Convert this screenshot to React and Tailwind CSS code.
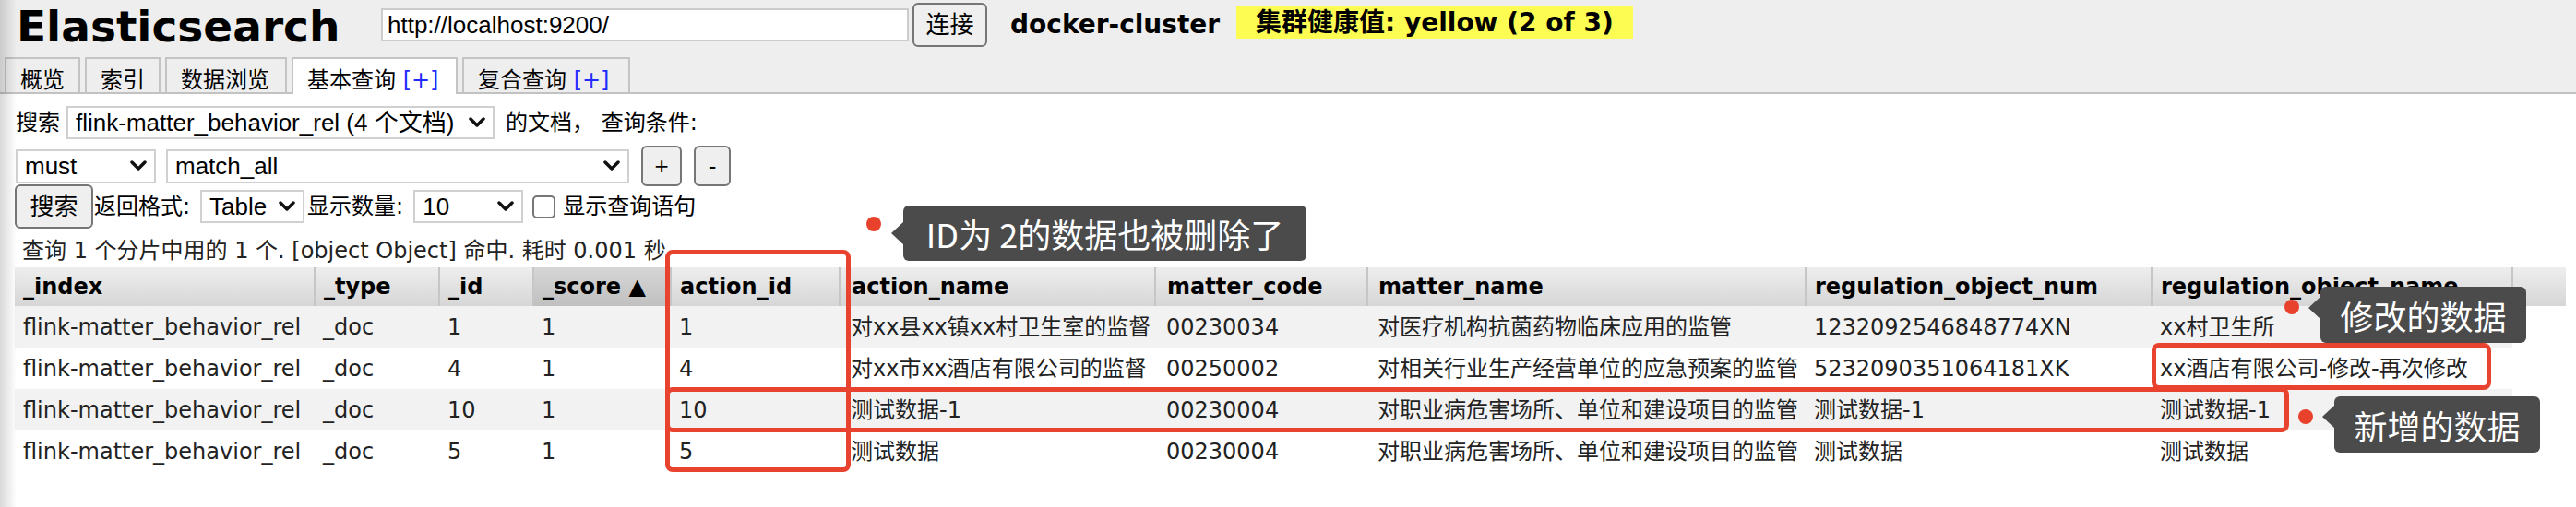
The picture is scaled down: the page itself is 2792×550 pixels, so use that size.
import React from "react";

const CTRL = "font-['Liberation_Sans','Noto_Sans_CJK_SC',sans-serif]";

const columns = [
  { name: "_index", w: "w-[325px]" },
  { name: "_type", w: "w-[135px]" },
  { name: "_id", w: "w-[102px]" },
  { name: "_score ▲", w: "w-[149px]", sorted: true },
  { name: "action_id", w: "w-[183px]" },
  { name: "action_name", w: "w-[342px]", pad: "pl-[12px]" },
  { name: "matter_code", w: "w-[230px]", pad: "pl-[12px]" },
  { name: "matter_name", w: "w-[475px]", pad: "pl-[11px]" },
  { name: "regulation_object_num", w: "w-[375px]" },
  { name: "regulation_object_name", w: "w-[391px]" },
];

const rows = [
  ["flink-matter_behavior_rel", "_doc", "1", "1", "1", "对xx县xx镇xx村卫生室的监督", "00230034", "对医疗机构抗菌药物临床应用的监管", "1232092546848774XN", "xx村卫生所"],
  ["flink-matter_behavior_rel", "_doc", "4", "1", "4", "对xx市xx酒店有限公司的监督", "00250002", "对相关行业生产经营单位的应急预案的监管", "5232090351064181XK", "xx酒店有限公司-修改-再次修改"],
  ["flink-matter_behavior_rel", "_doc", "10", "1", "10", "测试数据-1", "00230004", "对职业病危害场所、单位和建设项目的监管", "测试数据-1", "测试数据-1"],
  ["flink-matter_behavior_rel", "_doc", "5", "1", "5", "测试数据", "00230004", "对职业病危害场所、单位和建设项目的监管", "测试数据", "测试数据"],
];

function Chevron() {
  return (
    <svg width="18" height="12" viewBox="0 0 18 12" className="shrink-0">
      <polyline points="2,2 9,9 16,2" fill="none" stroke="#111" strokeWidth="3.5" strokeLinecap="round" strokeLinejoin="round" />
    </svg>
  );
}

function Select({ value, className }) {
  return (
    <div className={`flex items-center justify-between border-2 border-[#d0d0d0] bg-white pl-[8px] pr-[8px] text-[26px] text-black ${CTRL} ${className}`}>
      <span className="whitespace-nowrap">{value}</span>
      <Chevron />
    </div>
  );
}

function Tab({ label, plus, active, w }) {
  return (
    <div
      className={`border-2 border-b-0 border-[#c4c4c4] pl-[15px] pt-[8px] text-[24px] leading-[30px] whitespace-nowrap ${w} ${
        active ? "relative z-10 h-[40px] -mb-[2px] bg-white" : "h-[38px] bg-[#eeeeee]"
      }`}
    >
      {label}
      {plus && <span className="text-[#1f2bff]"> [+]</span>}
    </div>
  );
}

export default function App() {
  return (
    <div className="relative h-[550px] w-[2792px] overflow-hidden bg-white font-['DejaVu_Sans','Noto_Sans_CJK_SC',sans-serif] text-black">
      {/* Header */}
      <div className="bg-[#eeeeee]">
        <div className="flex h-[62px] items-start pl-[18px]">
          <h1 className="mt-[6px] w-[395px] text-[47px] font-bold leading-[46px]">Elasticsearch</h1>
          <input
            readOnly
            value="http://localhost:9200/"
            className={`mt-[9px] h-[36px] w-[572px] border-2 border-[#cccccc] bg-white pl-[5px] text-[26px] outline-none ${CTRL}`}
          />
          <button className={`ml-[4px] mt-[3px] h-[48px] w-[81px] rounded-[6px] border-2 border-[#767676] bg-[#efefef] text-[26px] ${CTRL}`}>
            连接
          </button>
          <span className="ml-[25px] mt-[11px] w-[245px] text-[28px] font-bold leading-[32px]">docker-cluster</span>
          <span className="mt-[7px] h-[35px] bg-[#fdfc53] px-[21px] text-[28px] font-bold leading-[35px]">
            集群健康值: yellow (2 of 3)
          </span>
        </div>
        <div className="flex h-[40px] items-end gap-[5px] border-b-2 border-[#c2c2c2] pl-[5px]">
          <Tab label="概览" w="w-[82px]" />
          <Tab label="索引" w="w-[82px]" />
          <Tab label="数据浏览" w="w-[132px]" />
          <Tab label="基本查询" plus active w="w-[180px]" />
          <Tab label="复合查询" plus w="w-[182px]" />
        </div>
      </div>

      {/* Query form */}
      <div className="pl-[17px]">
        <div className="mt-[13px] flex h-[36px] items-center">
          <span className="text-[24px]">搜索</span>
          <Select className="ml-[7px] h-[36px] w-[464px]" value="flink-matter_behavior_rel (4 个文档)" />
          <span className="ml-[12px] text-[24px]">的文档， 查询条件:</span>
        </div>
        <div className="mt-[7px] flex h-[44px] items-center">
          <Select className="h-[37px] w-[152px]" value="must" />
          <Select className="ml-[11px] h-[37px] w-[502px]" value="match_all" />
          <button className={`ml-[13px] h-[44px] w-[44px] rounded-[6px] border-2 border-[#767676] bg-[#efefef] text-[26px] ${CTRL}`}>+</button>
          <button className={`ml-[13px] h-[44px] w-[40px] rounded-[6px] border-2 border-[#767676] bg-[#efefef] text-[26px] ${CTRL}`}>-</button>
        </div>
        <div className="-mt-[2px] flex h-[48px] items-center">
          <button className={`-ml-[1px] h-[48px] w-[85px] rounded-[6px] border-2 border-[#767676] bg-[#efefef] text-[26px] ${CTRL}`}>
            搜索
          </button>
          <span className="ml-[1px] text-[24px]">返回格式:</span>
          <Select className="ml-[11px] h-[36px] w-[113px]" value="Table" />
          <span className="ml-[3px] text-[24px]">显示数量:</span>
          <Select className="ml-[11px] h-[36px] w-[119px]" value="10" />
          <span className="ml-[10px] h-[25px] w-[25px] rounded-[5px] border-2 border-[#767676] bg-white" />
          <span className="ml-[8px] text-[24px]">显示查询语句</span>
        </div>
        <div className="ml-[7px] mt-[9px] text-[24px] leading-[30px] text-[#222]">
          查询 1 个分片中用的 1 个. [object Object] 命中. 耗时 0.001 秒
        </div>
      </div>

      {/* Results table */}
      <table className="ml-[16px] mt-[3px] table-fixed border-collapse text-[24px]">
        <thead>
          <tr className="h-[42px]">
            {columns.map((c) => (
              <th
                key={c.name}
                className={`${c.w} ${c.pad || "pl-[9px]"} border-r-2 border-[#c6c6c6] text-left font-bold whitespace-nowrap overflow-hidden bg-linear-to-b ${
                  c.sorted ? "from-[#d6d6d6] to-[#c0c0c0]" : "from-[#eeeeee] to-[#d6d6d6]"
                }`}
              >
                {c.name}
              </th>
            ))}
            <th className="w-[58px] bg-linear-to-b from-[#eeeeee] to-[#d6d6d6]" />
          </tr>
        </thead>
        <tbody>
          {rows.map((r, i) => (
            <tr key={i} className="h-[45px]">
              {r.map((cell, j) => (
                <td
                  key={j}
                  className={`${columns[j].pad || "pl-[9px]"} whitespace-nowrap text-[#222] ${i % 2 === 0 ? "bg-[#f2f2f2]" : "bg-white"}`}
                >
                  {cell}
                </td>
              ))}
              <td className="bg-white" />
            </tr>
          ))}
        </tbody>
      </table>

      {/* Left edge shade */}
      <div className="pointer-events-none absolute inset-y-0 left-0 w-[18px] bg-linear-to-r from-black/15 to-transparent" />

      {/* Annotation boxes */}
      <div className="absolute left-[721px] top-[271px] h-[241px] w-[201px] rounded-[8px] border-[5px] border-[#e8432e]" />
      <div className="absolute left-[721px] top-[420px] h-[49px] w-[1760px] rounded-[8px] border-[5px] border-[#e8432e]" />
      <div className="absolute left-[2332px] top-[372px] h-[51px] w-[368px] rounded-[8px] border-[5px] border-[#e8432e]" />

      {/* Callouts */}
      <span className="absolute left-[939px] top-[235px] h-[16px] w-[16px] rounded-full bg-[#e9422c]" />
      <div className="absolute left-[979px] top-[223px] flex h-[60px] w-[437px] items-center justify-center rounded-[6px] bg-[#4b4b4b] font-['Noto_Sans_CJK_SC',sans-serif] text-[36px] text-white">
        <svg width="14" height="26" viewBox="0 0 14 26" className="absolute -left-[13px] top-[17px]">
          <path d="M14 0 L0 13 L14 26 Z" fill="#4b4b4b" />
        </svg>
        ID为 2的数据也被删除了
      </div>

      <span className="absolute left-[2476px] top-[325px] h-[16px] w-[16px] rounded-full bg-[#e9422c]" />
      <div className="absolute left-[2515px] top-[311px] flex h-[61px] w-[223px] items-center justify-center rounded-[6px] bg-[#4b4b4b] font-['Noto_Sans_CJK_SC',sans-serif] text-[36px] text-white">
        <svg width="14" height="26" viewBox="0 0 14 26" className="absolute -left-[13px] top-[10px]">
          <path d="M14 0 L0 13 L14 26 Z" fill="#4b4b4b" />
        </svg>
        修改的数据
      </div>

      <span className="absolute left-[2491px] top-[444px] h-[16px] w-[16px] rounded-full bg-[#e9422c]" />
      <div className="absolute left-[2530px] top-[430px] flex h-[61px] w-[223px] items-center justify-center rounded-[6px] bg-[#4b4b4b] font-['Noto_Sans_CJK_SC',sans-serif] text-[36px] text-white">
        <svg width="14" height="26" viewBox="0 0 14 26" className="absolute -left-[13px] top-[9px]">
          <path d="M14 0 L0 13 L14 26 Z" fill="#4b4b4b" />
        </svg>
        新增的数据
      </div>
    </div>
  );
}
